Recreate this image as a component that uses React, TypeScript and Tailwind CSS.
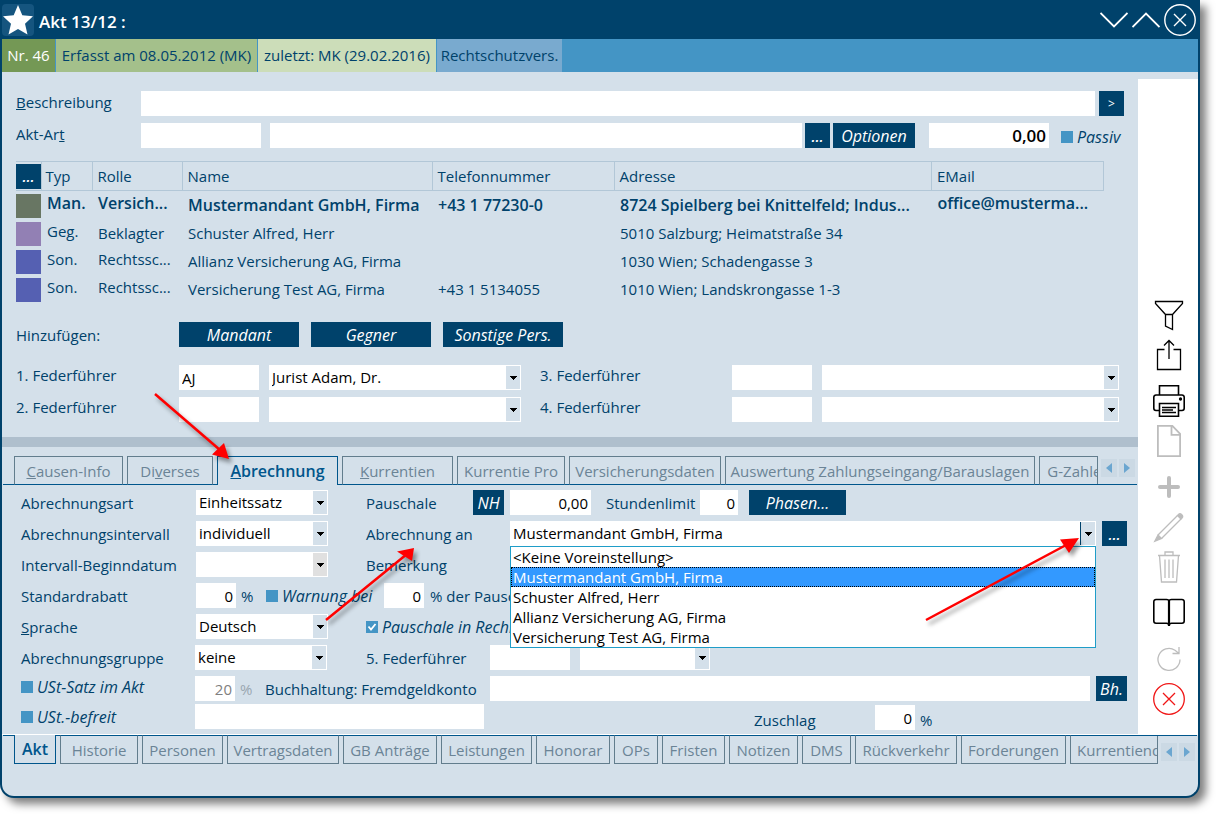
import { useId } from "react";
import type { ReactNode } from "react";

const FIELD = "h-[25px] min-w-0 bg-white px-[3px] text-black outline-none";
const NUM = "h-[25px] min-w-0 bg-white px-[3px] text-right text-black outline-none";
const BTN =
  "flex h-[25px] shrink-0 items-center justify-center whitespace-nowrap bg-[#00426b] text-base italic text-white";
const DOTS =
  "flex h-[25px] w-[25px] shrink-0 items-center justify-center bg-[#00426b] font-semibold italic text-white";

function Combo({
  label,
  value,
  className,
  arrow = "bg-[#d4e0ea]",
  children,
}: {
  label: string;
  value: string;
  className: string;
  arrow?: string;
  children?: ReactNode;
}) {
  return (
    <div className={`relative h-[25px] bg-white ${className}`}>
      <select
        aria-label={label}
        defaultValue={value}
        className="h-full w-full appearance-none bg-transparent pb-[2px] pl-[3px] pr-5 text-black outline-none"
      >
        <option>{value}</option>
      </select>
      <span
        className={`pointer-events-none absolute inset-y-px right-px flex w-[14px] items-center justify-center ${arrow}`}
      >
        <svg width="8" height="4" viewBox="0 0 8 4" shapeRendering="crispEdges">
          <path d="M0 0h8L4 4z" fill="#000" />
        </svg>
      </span>
      {children}
    </div>
  );
}

function Check({ label, checked = false }: { label: string; checked?: boolean }) {
  const id = useId();
  return (
    <span className="flex items-center gap-1">
      <span className="relative flex size-3 shrink-0">
        <input
          id={id}
          type="checkbox"
          defaultChecked={checked}
          className="size-3 appearance-none bg-[#4495c5]"
        />
        {checked && (
          <svg viewBox="0 0 12 12" className="pointer-events-none absolute inset-0 size-3">
            <path d="M2.500 5.500l2.500 3 4.500-5.500" fill="none" stroke="#fff" strokeWidth="1.800" />
          </svg>
        )}
      </span>
      <label htmlFor={id} className="whitespace-nowrap text-base leading-5 italic">
        {label}
      </label>
    </span>
  );
}

type Person = {
  color: string;
  typ: string;
  rolle: string;
  name: string;
  tel: string;
  adresse: string;
  mail: string;
  main?: boolean;
};

const PERSONS: Person[] = [
  { color: "bg-[#687663]", typ: "Man.", rolle: "Versich...", name: "Mustermandant GmbH, Firma", tel: "+43 1 77230-0", adresse: "8724 Spielberg bei Knittelfeld; Indus...", mail: "office@musterma...", main: true },
  { color: "bg-[#9280b4]", typ: "Geg.", rolle: "Beklagter", name: "Schuster Alfred, Herr", tel: "", adresse: "5010 Salzburg; Heimatstraße 34", mail: "" },
  { color: "bg-[#5560b2]", typ: "Son.", rolle: "Rechtssc...", name: "Allianz Versicherung AG, Firma", tel: "", adresse: "1030 Wien; Schadengasse 3", mail: "" },
  { color: "bg-[#5560b2]", typ: "Son.", rolle: "Rechtssc...", name: "Versicherung Test AG, Firma", tel: "+43 1 5134055", adresse: "1010 Wien; Landskrongasse 1-3", mail: "" },
];

const TOP_TABS: { width: string; text: ReactNode; active?: boolean }[] = [
  { width: "w-[109px]", text: <><u>C</u>ausen-Info</> },
  { width: "w-[86px]", text: <>Di<u>v</u>erses</> },
  { width: "w-[121px]", text: <><u>A</u>brechnung</>, active: true },
  { width: "w-[111px]", text: <><u>K</u>urrentien</> },
  { width: "w-[108px]", text: "Kurrentie Pro" },
  { width: "w-[152px]", text: "Versicherungsdaten" },
  { width: "w-[310px]", text: "Auswertung Zahlungseingang/Barauslagen" },
  { width: "w-[80px]", text: "G-Zahlen" },
];

const BOTTOM_TABS: { width: string; text: string; active?: boolean }[] = [
  { width: "w-[42px]", text: "Akt", active: true },
  { width: "w-[78px]", text: "Historie" },
  { width: "w-[81px]", text: "Personen" },
  { width: "w-[112px]", text: "Vertragsdaten" },
  { width: "w-[94px]", text: "GB Anträge" },
  { width: "w-[91px]", text: "Leistungen" },
  { width: "w-[74px]", text: "Honorar" },
  { width: "w-[44px]", text: "OPs" },
  { width: "w-[63px]", text: "Fristen" },
  { width: "w-[69px]", text: "Notizen" },
  { width: "w-[49px]", text: "DMS" },
  { width: "w-[102px]", text: "Rückverkehr" },
  { width: "w-[105px]", text: "Forderungen" },
  { width: "w-[112px]", text: "Kurrentiendat" },
];

function TabScroll() {
  return (
    <div className="flex gap-[2px]">
      <button aria-label="Zurück" className="flex h-[18px] w-4 items-center justify-center bg-[#cbd9e4]">
        <svg width="6" height="10" viewBox="0 0 6 10"><path d="M6 0v10L0 5z" fill="#6ba6d0" /></svg>
      </button>
      <button aria-label="Weiter" className="flex h-[18px] w-4 items-center justify-center bg-[#cbd9e4]">
        <svg width="6" height="10" viewBox="0 0 6 10"><path d="M0 0v10l6-5z" fill="#6ba6d0" /></svg>
      </button>
    </div>
  );
}

const OPTIONS = [
  "<Keine Voreinstellung>",
  "Mustermandant GmbH, Firma",
  "Schuster Alfred, Herr",
  "Allianz Versicherung AG, Firma",
  "Versicherung Test AG, Firma",
];

function Tool({ label, color, children }: { label: string; color: string; children: ReactNode }) {
  return (
    <button aria-label={label} className={`size-8 ${color}`}>
      <svg viewBox="0 0 32 32" width="32" height="32" fill="none" stroke="currentColor" strokeWidth="1.300">
        {children}
      </svg>
    </button>
  );
}

function Toolbar() {
  const on = "text-black";
  const off = "text-[#bdbdbd]";
  return (
    <aside className="mt-[7px] flex w-[60px] shrink-0 flex-col items-center justify-end gap-[14px] bg-white pb-[19px] pl-[2px]">
      <div className="flex flex-col gap-2">
        <Tool label="Filter" color={on}>
          <path d="M2.500 2.500h27v2L19.500 15.500h-7L2.500 4.500z M12.500 15.500v11.500l7 3.500v-15z" />
        </Tool>
        <Tool label="Teilen" color={on}>
          <path d="M11.500 10.500h-7v20h23v-20h-7M16 20V1.500M11 6.500l5-5 5 5" />
        </Tool>
      </div>
      <div className="flex flex-col gap-2">
        <Tool label="Drucken" color={on}>
          <path strokeWidth="1.600" d="M6.500 10V.8h19V10M6.500 25.500H3A2.200 2.200 0 0 1 .8 23.300V12.200A2.200 2.200 0 0 1 3 10h26a2.200 2.200 0 0 1 2.200 2.200v11.100a2.200 2.200 0 0 1-2.200 2.200h-3.500M6.500 18.500h19v12.700h-19z" />
          <path d="M9 22.500h14M9 25h11M9 27.500h14" />
          <circle cx="27.500" cy="14" r="1" fill="currentColor" />
        </Tool>
        <Tool label="Neues Dokument" color={off}>
          <path strokeWidth="1.800" d="M4.900.9h14.500l7.700 8v22.200H4.900zM18.500.9v9h8.600" />
        </Tool>
      </div>
      <div className="flex flex-col gap-2">
        <Tool label="Hinzufügen" color={off}>
          <path strokeWidth="4" strokeLinecap="round" d="M16 7v18M7 16h18" />
        </Tool>
        <Tool label="Bearbeiten" color={off}>
          <path d="M5 24L24.500 4.500M8.500 27.500L28 8" />
          <path fill="currentColor" d="M5 24l3.500 3.500L1.800 30.200zM25.500 3.500c2-2 5.500 1.500 3.500 3.500l-1 1-3.500-3.500z" />
        </Tool>
        <Tool label="Löschen" color={off}>
          <path d="M5 4.500h22M6.500 4.500l2 26.500h15l2-26.500M12 4.500V1h8v3.500M12 8.500v18.500M16 8.500v18.500M20 8.500v18.500" />
        </Tool>
      </div>
      <Tool label="Nachschlagen" color={on}>
        <path strokeWidth="1.600" d="M16 27V4.500C16 3 14.500 2.500 13.500 2.500H3A2.200 2.200 0 0 0 .8 4.700V24A2.200 2.200 0 0 0 3 26.200h10.500c1.500 0 2.500.8 2.500 2.300 0-1.500 1-2.300 2.500-2.300H29a2.200 2.200 0 0 0 2.200-2.200V4.700A2.200 2.200 0 0 0 29 2.500H18.500C17.500 2.500 16 3 16 4.500" />
        <path strokeWidth="2.200" d="M16 4v25" />
      </Tool>
      <div className="flex flex-col gap-2">
        <Tool label="Aktualisieren" color={off}>
          <path d="M27 16.500a11 11 0 1 1-5-9.300l4 3.300M26 4v6.500h-6.500" />
        </Tool>
        <Tool label="Abbrechen" color="text-[#f01616]">
          <circle cx="16" cy="16" r="15.300" />
          <path d="M10 10l12 12M22 10L10 22" />
        </Tool>
      </div>
    </aside>
  );
}

export default function App() {
  return (
    <div className="relative bg-white pb-4 pr-4 font-['Open_Sans',sans-serif] text-[15px] leading-5 text-[#00426b]">
      <div className="overflow-hidden rounded-b-[14px] border-x-2 border-b-2 border-[#00426b] bg-[#d4e0ea] shadow-[6px_6px_8px_rgba(0,0,0,0.5)]">
        <header className="flex h-[39px] items-center justify-between bg-[#00426b] pr-[2px] text-white">
          <div className="flex items-center gap-[5px]">
            <span className="flex size-8 items-center justify-center rounded bg-[#15557f]">
              <svg width="30" height="30" viewBox="0 0 30 30">
                <path fill="#fff" d="M15 0l4.300 10.300L30 11.300l-8 7.400 2.500 10.800L15 24l-9.500 5.500L8 18.700l-8-7.400 10.700-1z" />
              </svg>
            </span>
            <h1 className="pt-1 text-[17px] font-semibold">Akt 13/12 :</h1>
          </div>
          <div className="flex items-center gap-1">
            <button aria-label="Nach unten">
              <svg width="28" height="16" viewBox="0 0 28 16" fill="none" stroke="#fff" strokeWidth="1.800"><path d="M.5 1L14 14.500 27.500 1" /></svg>
            </button>
            <button aria-label="Nach oben">
              <svg width="28" height="16" viewBox="0 0 28 16" fill="none" stroke="#fff" strokeWidth="1.800"><path d="M.5 15L14 1.500 27.500 15" /></svg>
            </button>
            <button aria-label="Schließen">
              <svg width="32" height="32" viewBox="0 0 32 32" fill="none" stroke="#fff" strokeWidth="1.400"><circle cx="16" cy="16" r="15.200" /><path d="M10 10l12 12M22 10L10 22" /></svg>
            </button>
          </div>
        </header>

        <div className="flex h-[33px] gap-px whitespace-nowrap bg-[#4495c5] leading-[33px]">
          <span className="w-[53px] bg-[#749855] text-center text-white">Nr. 46</span>
          <span className="w-[201px] bg-[#a4c08b] text-center">Erfasst am 08.05.2012 (MK)</span>
          <span className="w-[178px] bg-[#ccddb9] text-center">zuletzt: MK (29.02.2016)</span>
          <span className="w-[125px] bg-[#79aacf] text-center">Rechtschutzvers.</span>
        </div>

        <div className="flex">
          <main className="min-w-0 flex-1">
            <section className="flex flex-col gap-[7px] pl-[14px] pr-[14px] pt-[19px]">
              <div className="flex">
                <label htmlFor="beschreibung" className="w-[125px] shrink-0 pt-px"><u>B</u>eschreibung</label>
                <input id="beschreibung" className={`${FIELD} flex-1`} />
                <button className="ml-1 h-[25px] w-[25px] shrink-0 bg-[#00426b] text-xs text-white">&gt;</button>
              </div>
              <div className="flex">
                <label htmlFor="aktart" className="w-[125px] shrink-0 pt-px">Akt-Ar<u>t</u></label>
                <input id="aktart" className={`${FIELD} w-[120px]`} />
                <input aria-label="Akt-Art Bezeichnung" className={`${FIELD} ml-[9px] flex-1`} />
                <button aria-label="Akt-Art wählen" className={`${DOTS} ml-[3px]`}>...</button>
                <button className={`${BTN} ml-[3px] w-[82px]`}>Optionen</button>
                <input aria-label="Betrag" defaultValue="0,00" className={`${NUM} ml-[14px] w-[120px] text-[17px] font-semibold`} />
                <div className="ml-3 flex w-[63px] items-center pt-[3px]"><Check label="Passiv" /></div>
              </div>
            </section>

            <section className="pl-[14px] pr-[34px] pt-[13px]">
              <table className="w-full table-fixed border-collapse text-left">
                <colgroup>
                  <col className="w-[25px]" />
                  <col className="w-[51px]" />
                  <col className="w-[90px]" />
                  <col className="w-[250px]" />
                  <col className="w-[182px]" />
                  <col />
                  <col className="w-[172px]" />
                </colgroup>
                <thead>
                  <tr className="h-[29px] *:border *:border-[#b2c7d7] *:p-0 *:pl-[5px] *:font-normal">
                    <th className="border-l-0! pl-0!">
                      <button aria-label="Spalten wählen" className={DOTS}>...</button>
                    </th>
                    <th className="border-l-0! pl-[4px]!">Typ</th>
                    <th>Rolle</th>
                    <th>Name</th>
                    <th>Telefonnummer</th>
                    <th>Adresse</th>
                    <th>EMail</th>
                  </tr>
                </thead>
                <tbody>
                  {PERSONS.map((p) => (
                    <tr
                      key={p.name}
                      className={
                        p.main
                          ? "h-7 whitespace-nowrap text-base font-semibold *:p-0 *:pl-[6px]"
                          : "h-7 whitespace-nowrap *:p-0 *:pl-[6px]"
                      }
                    >
                      <td className="pl-0!"><div className={`mt-[2px] h-6 w-[25px] ${p.color}`} /></td>
                      <td className="pb-1!">{p.typ}</td>
                      <td className={p.rolle.endsWith("...") ? "pb-1!" : ""}>{p.rolle}</td>
                      <td>{p.name}</td>
                      <td>{p.tel}</td>
                      <td>{p.adresse}</td>
                      <td className="pb-1!">{p.mail}</td>
                    </tr>
                  ))}
                </tbody>
              </table>
            </section>

            <section className="flex items-center gap-3 pl-[14px] pt-[19px]">
              <span className="w-[151px]">Hinzufügen:</span>
              <button className={`${BTN} w-[120px]`}>Mandant</button>
              <button className={`${BTN} w-[120px]`}>Gegner</button>
              <button className={`${BTN} w-[120px]`}>Sonstige Pers.</button>
            </section>

            <section className="flex flex-col gap-[7px] pb-[15px] pl-[14px] pr-[19px] pt-[18px]">
              {[
                { l: "1. Federführer", k: "AJ", n: "Jurist Adam, Dr.", r: "3. Federführer" },
                { l: "2. Federführer", k: "", n: "", r: "4. Federführer" },
              ].map((f) => (
                <div key={f.l} className="flex">
                  <label htmlFor={f.l} className="w-[163px] shrink-0">{f.l}</label>
                  <input id={f.l} defaultValue={f.k} className={`${FIELD} w-20`} />
                  <Combo label={f.l} value={f.n} className="ml-[10px] w-[252px]" />
                  <label htmlFor={f.r} className="ml-[19px] w-[192px] shrink-0">{f.r}</label>
                  <input id={f.r} className={`${FIELD} w-20`} />
                  <Combo label={f.r} value="" className="ml-[10px] flex-1" />
                </div>
              ))}
            </section>

            <div className="h-[10px] bg-[#afbfcd]" />

            <nav className="mx-px mt-[9px] flex h-[29px]">
              <div className="w-[11px] border-b border-[#00568c]" />
              <div className="flex min-w-0 flex-1 overflow-hidden">
                {TOP_TABS.map((t, i) => (
                  <div key={i} className="flex shrink-0">
                    <button
                      className={
                        t.active
                          ? `${t.width} h-[29px] shrink-0 border-x border-t border-[#00568c] text-base font-semibold text-[#00568c]`
                          : `${t.width} h-[29px] shrink-0 whitespace-nowrap border border-[#627d8d] border-b-[#00568c] text-[#6b8496]`
                      }
                    >
                      {t.text}
                    </button>
                    <span className="w-1 border-b border-[#00568c]" />
                  </div>
                ))}
              </div>
              <div className="flex border-b border-[#00568c]">
                <div className="border-l border-[#627d8d] pl-[3px] pr-[2px] pt-[3px]"><TabScroll /></div>
              </div>
            </nav>

            <section className="flex flex-col gap-[6px] whitespace-nowrap pb-[4px] pl-[19px] pr-[11px] pt-[5px]">
              <div className="flex items-center">
                <span className="w-[175px] shrink-0">Abrechnungsart</span>
                <Combo label="Abrechnungsart" value="Einheitssatz" className="w-[132px]" />
                <label htmlFor="pauschale" className="ml-[38px] w-[107px]">Pauschale</label>
                <button className={`${BTN} w-[31px]`}>NH</button>
                <input id="pauschale" defaultValue="0,00" className={`${NUM} ml-[6px] w-[81px]`} />
                <label htmlFor="limit" className="ml-[15px] w-[94px]">Stundenlimit</label>
                <input id="limit" defaultValue="0" className={`${NUM} w-[38px]`} />
                <button className={`${BTN} ml-[11px] w-[97px]`}>Phasen...</button>
              </div>
              <div className="flex items-center">
                <span className="w-[175px] shrink-0">Abrechnungsintervall</span>
                <Combo label="Abrechnungsintervall" value="individuell" className="w-[132px]" />
                <span className="ml-[38px] w-[144px]">Abrechnung an</span>
                <Combo
                  label="Abrechnung an"
                  value="Mustermandant GmbH, Firma"
                  className="flex-1"
                  arrow="bg-[#d4e0ea] shadow-[-1px_0_0_#00426b]"
                >
                  <ul role="listbox" className="absolute inset-x-0 top-full z-10 border border-[#1f9dc8] bg-white text-black">
                    {OPTIONS.map((o, i) => (
                      <li
                        key={o}
                        role="option"
                        aria-selected={i === 1}
                        className={
                          i === 1
                            ? "h-5 bg-[#3399ff] pl-[2px] text-white outline-1 -outline-offset-1 outline-dotted outline-black"
                            : "h-5 pl-[2px]"
                        }
                      >
                        {o}
                      </li>
                    ))}
                  </ul>
                </Combo>
                <button aria-label="Person wählen" className={`${DOTS} ml-[6px]`}>...</button>
              </div>
              <div className="flex items-center">
                <span className="w-[175px] shrink-0">Intervall-Beginndatum</span>
                <Combo label="Intervall-Beginndatum" value="" className="w-[132px]" arrow="bg-[#e0e0e0]" />
                <span className="ml-[38px]">Bemerkung</span>
              </div>
              <div className="flex items-center">
                <label htmlFor="rabatt" className="w-[175px] shrink-0">Standardrabatt</label>
                <input id="rabatt" defaultValue="0" className={`${NUM} w-10`} />
                <span className="ml-[5px] w-[25px]">%</span>
                <div className="w-[118px]"><Check label="Warnung bei" /></div>
                <input aria-label="Prozent der Pauschale" defaultValue="0" className={`${NUM} w-10`} />
                <span className="ml-[6px]">% der Pauschale</span>
              </div>
              <div className="flex items-center">
                <span className="w-[175px] shrink-0"><u>S</u>prache</span>
                <Combo label="Sprache" value="Deutsch" className="w-[132px]" />
                <div className="ml-[38px]"><Check label="Pauschale in Rechnung" checked /></div>
              </div>
              <div className="flex items-center">
                <span className="w-[174px] shrink-0">Abrechnungsgruppe</span>
                <Combo label="Abrechnungsgruppe" value="keine" className="w-[132px]" />
                <label htmlFor="f5" className="ml-[39px] w-[124px]">5. Federführer</label>
                <input id="f5" className={`${FIELD} w-20`} />
                <Combo label="5. Federführer" value="" className="ml-[10px] w-[130px]" />
              </div>
              <div className="flex flex-col gap-[3px]">
                <div className="flex items-center">
                  <div className="w-[174px] shrink-0 pb-1"><Check label="USt-Satz im Akt" /></div>
                  <input aria-label="USt-Satz" defaultValue="20" disabled className="h-[25px] w-10 bg-white px-[3px] text-right text-[#808080]" />
                  <span className="ml-[5px] w-[25px] text-[#9aa7b1]">%</span>
                  <label htmlFor="konto" className="w-[225px]">Buchhaltung: Fremdgeldkonto</label>
                  <input id="konto" className={`${FIELD} flex-1`} />
                  <button className={`${BTN} ml-[6px] w-[31px]`}>Bh.</button>
                </div>
                <div className="flex h-[26px] items-start">
                  <div className="w-[174px] shrink-0 pt-[3px]"><Check label="USt.-befreit" /></div>
                  <input aria-label="USt.-befreit Grund" className={`${FIELD} w-[289px]`} />
                  <label htmlFor="zuschlag" className="ml-[270px] w-[121px] self-end">Zuschlag</label>
                  <input id="zuschlag" defaultValue="0" className={`${NUM} w-10 self-end`} />
                  <span className="ml-[5px] self-end">%</span>
                </div>
              </div>
            </section>
          </main>
          <Toolbar />
        </div>

        <nav className="flex h-[30px] border-t border-white px-px">
          <div className="w-[11px] border-t border-[#00568c]" />
          <div className="flex min-w-0 flex-1 overflow-hidden">
            {BOTTOM_TABS.map((t) => (
              <div key={t.text} className="flex shrink-0">
                <button
                  className={
                    t.active
                      ? `${t.width} h-[29px] shrink-0 border-x border-b border-[#00568c] text-base font-semibold text-[#00568c]`
                      : `${t.width} h-[29px] shrink-0 whitespace-nowrap border border-[#627d8d] border-t-[#00568c] text-[#6b8496]`
                  }
                >
                  {t.text}
                </button>
                <span className="w-1 border-t border-[#00568c]" />
              </div>
            ))}
          </div>
          <div className="flex border-t border-[#00568c]">
            <div className="h-7 border-l border-[#627d8d] pl-[3px] pr-[2px] pt-[7px]"><TabScroll /></div>
          </div>
        </nav>
        <footer className="h-8" />
      </div>

      <svg
        className="pointer-events-none absolute left-0 top-0 z-20 drop-shadow-[3px_4px_2px_rgba(0,0,0,0.4)]"
        width="1216"
        height="814"
        viewBox="0 0 1216 814"
        fill="#f00"
        stroke="#f00"
      >
        <path d="M155 394L220 450M326 620L407 554M926 620L1068 544" strokeWidth="2.500" fill="none" />
        <path stroke="none" d="M229 459L212 454.500L224 443zM414 548L412 561L397 551.500zM1079 538L1069 553L1060 539.500z" />
      </svg>
    </div>
  );
}
